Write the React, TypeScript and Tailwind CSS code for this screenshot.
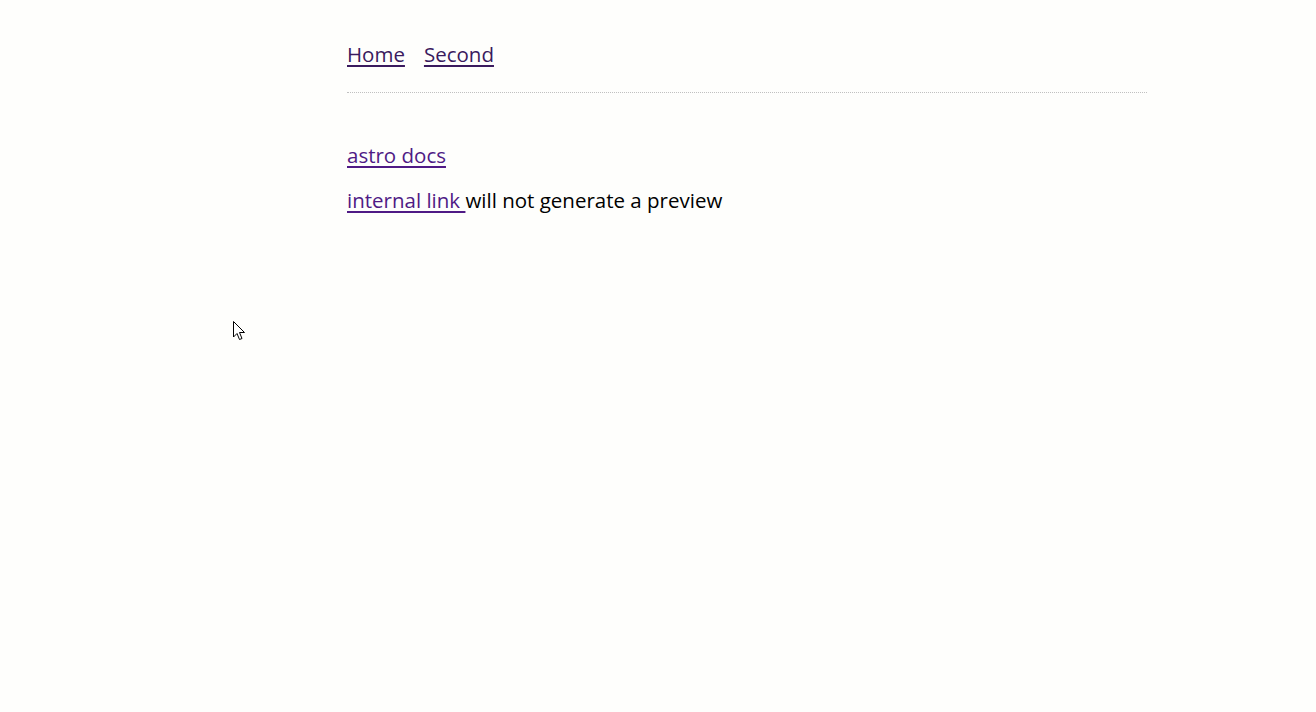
export default function App() {
  return (
    <div
      className="relative min-h-[712px] w-full bg-[#fefefc] text-[20.5px] text-black"
      style={{ fontFamily: '"Segoe UI", "Open Sans", "Noto Sans", sans-serif' }}
    >
      <div className="ml-[347px] w-[800px] pt-[40px]">
        <nav className="flex gap-[19px] leading-[28px]">
          <a href="#" className="text-[#3a1a5e] underline underline-offset-[3px]">Home</a>
          <a href="#" className="text-[#3a1a5e] underline underline-offset-[3px]">Second</a>
        </nav>
        <hr className="mt-[24px] border-0 border-t border-dotted border-[#c0c0c0]" />
        <div className="mt-[48px] flex flex-col gap-[17px] leading-[28px]">
          <p>
            <a href="#" className="text-[#4f1a85] underline underline-offset-[3px]">astro docs</a>
          </p>
          <p>
            <a href="#" className="text-[#4f1a85] underline underline-offset-[3px]">internal link </a>
            will not generate a preview
          </p>
        </div>
      </div>
      <svg className="absolute left-[233px] top-[321px]" width="13" height="20" viewBox="0 0 13 20">
        <path d="M0.5 0.5 L0.5 16 L4 12.5 L6.5 18.5 L9 17.5 L6.5 11.5 L11.5 11.5 Z" fill="#fff" stroke="#000" strokeWidth="1" strokeLinejoin="miter" />
      </svg>
    </div>
  );
}
